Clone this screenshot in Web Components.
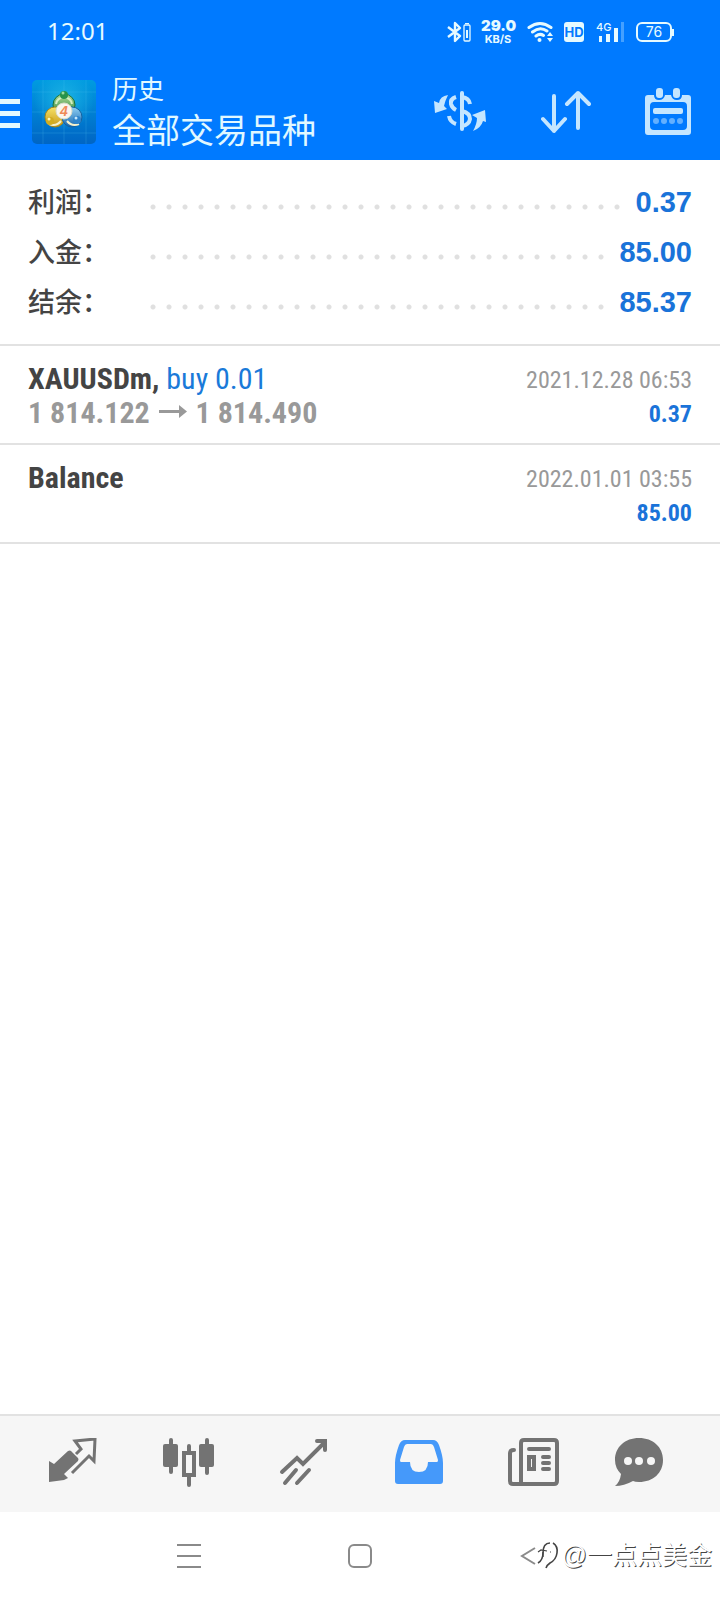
<!DOCTYPE html>
<html lang="zh-CN">
<head>
<meta charset="utf-8">
<meta name="viewport" content="width=device-width, initial-scale=1">
<title>历史</title>
<style>
    body {
        margin: 0;
        background: #fff;
        font-family: "Liberation Sans", "Noto Sans CJK SC", sans-serif;
    }
</style>
</head>
<body>
<history-app></history-app>

<script>
    class BaseElement extends HTMLElement {
        constructor() {
            super()
            this.attachShadow({ mode: "open" })
            this.shadowRoot.innerHTML = this.template()
        }
    }

    window.customElements.define('status-bar',
        class extends BaseElement {
            template() {
                return `
                <style>
                    :host{
                        display:flex;
                        align-items:center;
                        justify-content:space-between;
                        height:64px;
                        padding:0 46px 0 47px;
                        color:#e6faff;
                        font-family:Inter, "Noto Sans", sans-serif;
                    }
                    time{
                        font-family:"Noto Sans", sans-serif;
                        font-size:24px;
                        line-height:34px;
                        padding-bottom:2px;
                    }
                    .icons{
                        display:flex;
                        align-items:center;
                    }
                    .speed{
                        width:34px;
                        margin:0 12px 0 10px;
                        text-align:center;
                        font-size:11px;
                        line-height:12px;
                        font-weight:700;
                    }
                    .speed b{
                        display:block;
                        font-size:15px;
                        line-height:14px;
                    }
                    .hd{
                        width:20px;
                        margin:0 12px 0 10px;
                        border-radius:3px;
                        background:#e6faff;
                        color:#007aff;
                        text-align:center;
                        font-size:13px;
                        line-height:20px;
                        font-weight:700;
                    }
                    .cell{
                        display:grid;
                    }
                    .cell > *{
                        grid-area:1 / 1;
                    }
                    .cell span{
                        font-size:11px;
                        line-height:10px;
                        font-weight:500;
                    }
                    .battery{
                        display:flex;
                        align-items:center;
                        margin-left:12px;
                    }
                    .battery span{
                        box-sizing:border-box;
                        width:36px;
                        border:2px solid #e6faff;
                        border-radius:6px;
                        text-align:center;
                        font-size:14px;
                        line-height:16px;
                    }
                    .battery::after{
                        content:"";
                        width:2px;
                        height:7px;
                        background:#e6faff;
                    }
                    svg{
                        display:block;
                    }
                </style>
                <time>12:01</time>
                <div class="icons">
                    <svg width="24" height="22" viewBox="0 0 24 22" fill="none" stroke="currentColor">
                        <path d="M1 6l12 9-5 5V2l5 5-12 9" stroke-width="2.400" stroke-linejoin="round"/>
                        <rect x="17" y="4" width="6" height="16" rx="1" stroke-width="1.300"/>
                        <path d="M18 2.500h4"/>
                        <path d="M20 9v8" stroke-width="2"/>
                    </svg>
                    <div class="speed"><b>29.0</b>KB/S</div>
                    <svg width="27" height="22" viewBox="0 0 27 22" fill="none" stroke="currentColor" stroke-width="3" stroke-linecap="round">
                        <path d="M2 6.500Q13 -1.500 24 6.500M5.500 11Q13 5 20 10M9 15Q13 12 16.500 14.500"/>
                        <circle cx="12.500" cy="19" r="2" fill="currentColor" stroke="none"/>
                        <path d="M20 15l3-4 3 4zM20 17l3 4 3-4z" fill="currentColor" stroke="none"/>
                    </svg>
                    <div class="hd">HD</div>
                    <div class="cell">
                        <svg width="28" height="20" viewBox="0 0 28 20" fill="currentColor">
                            <rect x="3" y="14" width="3" height="6"/>
                            <rect x="10" y="12" width="4" height="8"/>
                            <rect x="18" y="6" width="4" height="14"/>
                            <rect x="25" width="3" height="20" opacity=".3"/>
                        </svg>
                        <span>4G</span>
                    </div>
                    <div class="battery"><span>76</span></div>
                </div>
                `
            }
        }
    )

    window.customElements.define('app-logo',
        class extends BaseElement {
            template() {
                return `
                <style>
                    :host{
                        display:block;
                        width:64px;
                        height:64px;
                    }
                </style>
                <svg width="64" height="64" viewBox="0 0 64 64" aria-hidden="true">
                    <defs>
                        <linearGradient id="bg" x2="0" y2="1"><stop stop-color="#009be0"/><stop offset="1" stop-color="#0065c4"/></linearGradient>
                        <radialGradient id="glow"><stop stop-color="#1cb4e4"/><stop offset="1" stop-color="#1cb4e4" stop-opacity="0"/></radialGradient>
                        <linearGradient id="green" x2="0" y2="1"><stop stop-color="#b5dc94"/><stop offset="1" stop-color="#1d7f3b"/></linearGradient>
                        <linearGradient id="gold" x2="0" y2="1"><stop stop-color="#f6e266"/><stop offset="1" stop-color="#c89818"/></linearGradient>
                        <linearGradient id="blue" x2="0" y2="1"><stop stop-color="#8fd0f5"/><stop offset="1" stop-color="#1766ae"/></linearGradient>
                    </defs>
                    <rect width="64" height="64" rx="5" fill="url(#bg)"/>
                    <circle cx="32" cy="20" r="30" fill="url(#glow)"/>
                    <path d="M11 0v64M32 0v64M54 0v64M0 12h64M0 32h64M0 53h64" stroke="#5fc8f5" stroke-opacity=".2"/>
                    <circle cx="32" cy="25" r="11" fill="url(#green)" stroke="#15703c"/>
                    <circle cx="23" cy="37" r="10" fill="url(#gold)" stroke="#a58720"/>
                    <circle cx="40" cy="37" r="10" fill="url(#blue)" stroke="#1761a0"/>
                    <path d="M24 24q1-6 8-7 7 1 8 7" fill="none" stroke="#d5efc2" stroke-width="2"/>
                    <path d="M17 44q7 3 12-3M35 41q5 6 12 3" fill="none" stroke="#f4f1cd" stroke-width="2"/>
                    <circle cx="32" cy="15" r="4" fill="#27934c"/>
                    <circle cx="18" cy="41" r="4" fill="#d2ad20"/>
                    <circle cx="45" cy="40" r="4" fill="#2c84cd"/>
                    <circle cx="31" cy="13" r="1.500" fill="#9bdc9f"/>
                    <circle cx="17" cy="39" r="1.500" fill="#fff6b8"/>
                    <circle cx="44" cy="38" r="1.500" fill="#c5e9ff"/>
                    <circle cx="32" cy="31" r="8" fill="#fbf6ee" stroke="#d9dcc8"/>
                    <text x="32" y="36" text-anchor="middle" font-family="Liberation Sans" font-size="14" font-style="italic" font-weight="700" fill="#f08a58">4</text>
                </svg>
                `
            }
        }
    )

    window.customElements.define('app-header',
        class extends BaseElement {
            template() {
                return `
                <style>
                    :host{
                        display:flex;
                        align-items:center;
                        height:96px;
                        color:#e1f8ff;
                    }
                    button{
                        padding:0;
                        border:0;
                        background:none;
                        color:inherit;
                    }
                    svg{
                        display:block;
                    }
                    .menu{
                        margin-right:12px;
                    }
                    .titles{
                        flex:1;
                        padding-left:16px;
                        font-family:"Noto Sans CJK SC", sans-serif;
                    }
                    h1, p{
                        margin:0;
                        font-weight:400;
                    }
                    p{
                        font-size:26px;
                        line-height:34px;
                    }
                    h1{
                        font-size:34px;
                        line-height:48px;
                    }
                    .actions{
                        display:flex;
                        gap:54px;
                        padding-right:29px;
                        color:#c5e6ff;
                    }
                </style>
                <button class="menu" aria-label="菜单">
                    <svg width="20" height="34" viewBox="0 0 20 34" fill="currentColor">
                        <path d="M0 4h20v5H0zM0 16h20v5H0zM0 28h20v5H0z"/>
                    </svg>
                </button>
                <app-logo></app-logo>
                <div class="titles">
                    <p><slot name="title"></slot></p>
                    <h1><slot name="subtitle"></slot></h1>
                </div>
                <div class="actions">
                    <button aria-label="货币">
                        <svg width="54" height="48" viewBox="0 0 54 48" fill="none" stroke="currentColor" stroke-width="4">
                            <path d="M29 5v36" stroke-linecap="round"/>
                            <path d="M23 9Q17 11 18 16q1 4 5 6M29 9q7 1 8 7M29 23q8 2 8 8-1 6-8 7M16 28q1 6 7 8"/>
                            <path d="M15 7Q7 8 6 15L1 13l1 12 12-4-3-3q1-5 4-11z" fill="currentColor" stroke="none"/>
                            <path d="M40 43q8-3 10-10l3 1-1-12-13 5 5 3q0 6-4 13z" fill="currentColor" stroke="none"/>
                        </svg>
                    </button>
                    <button aria-label="排序">
                        <svg width="50" height="48" viewBox="0 0 50 48" fill="none" stroke="currentColor" stroke-width="4" stroke-linecap="round" stroke-linejoin="round">
                            <path d="M13 8v35M2 31l11 12 11-12M37 40V5M26 16L37 5l11 11"/>
                        </svg>
                    </button>
                    <button aria-label="日期">
                        <svg width="46" height="48" viewBox="0 0 46 48">
                            <path fill="currentColor" fill-rule="evenodd" d="M3 7h6q0 5 5 5t6-5h6q1 5 6 5t5-5h6q3 0 3 3v34q0 3-3 3H3q-3 0-3-3V10q0-3 3-3zM9 14q-4 0-4 4v20q0 4 4 4h29q4 0 4-4V18q0-4-4-4z"/>
                            <rect x="11" width="7" height="10" rx="3" fill="currentColor"/>
                            <rect x="28" width="7" height="10" rx="3" fill="currentColor"/>
                            <rect x="8" y="20" width="30" height="6" rx="2" fill="currentColor"/>
                            <g fill="currentColor" opacity=".5">
                                <circle cx="11" cy="33" r="3"/><circle cx="19" cy="33" r="3"/><circle cx="27" cy="33" r="3"/><circle cx="35" cy="33" r="3"/>
                            </g>
                        </svg>
                    </button>
                </div>
                `
            }
        }
    )

    window.customElements.define('summary-row',
        class extends BaseElement {
            template() {
                return `
                <style>
                    :host{
                        display:flex;
                        align-items:baseline;
                        height:50px;
                        line-height:47px;
                    }
                    .label{
                        width:117px;
                        color:#444;
                        font-family:"Noto Sans CJK SC", sans-serif;
                        font-size:27px;
                        font-weight:500;
                    }
                    .dots{
                        flex:1;
                        align-self:center;
                        height:6px;
                        margin:10px 8px 0 0;
                        background:radial-gradient(circle at 8px 3px, #e0e0e0 2px, transparent 3px) 0 0 / 16px 6px repeat-x;
                    }
                    .value{
                        color:#1a73d9;
                        font-size:29px;
                        font-weight:700;
                    }
                </style>
                <span class="label"><slot name="label"></slot></span>
                <span class="dots"></span>
                <span class="value"><slot></slot></span>
                `
            }
        }
    )

    window.customElements.define('deal-item',
        class extends BaseElement {
            template() {
                return `
                <style>
                    :host{
                        display:flex;
                        justify-content:space-between;
                        padding:15px 28px 12px;
                        border-bottom:2px solid #e2e2e2;
                        font-family:"Roboto Condensed", Roboto, sans-serif;
                        font-size:30px;
                        line-height:35px;
                    }
                    .symbol{
                        color:#444;
                        font-weight:700;
                    }
                    .side{
                        color:#1a7ad9;
                    }
                    .price{
                        color:#999;
                        font-weight:700;
                        line-height:34px;
                    }
                    .right{
                        padding-top:2px;
                        text-align:right;
                        font-size:24px;
                        line-height:34px;
                    }
                    .time{
                        color:#999;
                    }
                    .profit{
                        color:#1a73d9;
                        font-weight:700;
                    }
                </style>
                <div>
                    <div><span class="symbol"><slot name="symbol"></slot></span> <span class="side"><slot name="side"></slot></span></div>
                    <div class="price"><slot name="price"></slot></div>
                </div>
                <div class="right">
                    <div class="time"><slot name="time"></slot></div>
                    <div class="profit"><slot name="profit"></slot></div>
                </div>
                `
            }
        }
    )

    window.customElements.define('price-arrow',
        class extends BaseElement {
            template() {
                return `
                <style>
                    :host{
                        display:inline-block;
                        margin:0 2px;
                    }
                    svg{
                        display:block;
                    }
                </style>
                <svg width="28" height="22" viewBox="0 0 28 22" role="img" aria-label="至">
                    <path d="M0 9h20V4l8 6.500-8 6.500v-5H0z" fill="currentColor"/>
                </svg>
                `
            }
        }
    )

    window.customElements.define('tab-bar',
        class extends BaseElement {
            template() {
                return `
                <style>
                    nav{
                        display:grid;
                        grid-template-columns:repeat(4, 1fr) 106px 106px;
                        justify-items:start;
                        box-sizing:border-box;
                        height:98px;
                        padding:22px 0 0 48px;
                        border-top:2px solid #e2e2e2;
                        background:#f6f6f6;
                    }
                    a{
                        color:#737373;
                    }
                    .active{
                        color:#4599fa;
                    }
                    svg{
                        display:block;
                    }
                </style>
                <nav>
                    <a href="#quotes" aria-label="行情">
                        <svg width="52" height="50" viewBox="0 0 52 50">
                            <path fill="currentColor" d="M1 23l5 3 14-13q2-1 3 0l7 7q1 1 0 3L16 36l4 4-4 2-15 2z"/>
                            <path fill="none" stroke="currentColor" stroke-width="3" d="M28 16l5-5-6-8 20-2-1 22-5-5-17 17"/>
                        </svg>
                    </a>
                    <a href="#chart" aria-label="图表">
                        <svg width="52" height="50" viewBox="0 0 52 50" fill="currentColor">
                            <rect y="6" width="15" height="23" rx="2"/><rect x="36" y="6" width="15" height="23" rx="2"/>
                            <path stroke="currentColor" stroke-width="4" stroke-linecap="round" d="M8 2v32M44 2v33M26 8v6M26 38v9"/>
                            <rect x="21" y="15" width="10" height="22" fill="none" stroke="currentColor" stroke-width="4"/>
                        </svg>
                    </a>
                    <a href="#trade" aria-label="交易">
                        <svg width="52" height="50" viewBox="0 0 52 50" fill="none" stroke="currentColor" stroke-width="4" stroke-linecap="round">
                            <path d="M4 34l15-14 6 6L47 4M39 3h8v9M7 45l11-13M19 45l12-13"/>
                        </svg>
                    </a>
                    <a class="active" href="#history" aria-label="历史">
                        <svg width="52" height="50" viewBox="0 0 52 50" fill="currentColor">
                            <path fill-rule="evenodd" d="M12 2h28q4 0 6 5 4 11 4 18v18q0 3-3 3H5q-3 0-3-3V25Q2 18 6 7q2-5 6-5zM14 6q-2 0-3 3L7 22q0 2 1 2h9q0 10 9 10t9-10h9q1 0 1-2L41 9q-1-3-3-3z"/>
                        </svg>
                    </a>
                    <a href="#news" aria-label="新闻">
                        <svg width="52" height="50" viewBox="0 0 52 50" fill="none" stroke="currentColor" stroke-width="4" stroke-linecap="round">
                            <path d="M13 46V5q0-3 3-3h30q3 0 3 3v38q0 3-3 3H5q-3 0-3-3V15q0-3 4-3"/>
                            <path d="M21 11h20M35 19h6M35 25h6M35 31h6"/>
                            <rect x="21" y="19" width="5" height="12"/>
                        </svg>
                    </a>
                    <a href="#messages" aria-label="消息">
                        <svg width="52" height="50" viewBox="0 0 52 50">
                            <path fill="currentColor" d="M25 0C39 0 49 9 49 22S39 44 25 44q-4 0-6-1-9 5-18 5 5-4 6-12-6-6-6-14C1 9 11 0 25 0z"/>
                            <g fill="#f6f6f6"><circle cx="14" cy="23" r="4"/><circle cx="25" cy="23" r="4"/><circle cx="37" cy="23" r="4"/></g>
                        </svg>
                    </a>
                </nav>
                `
            }
        }
    )

    window.customElements.define('system-nav',
        class extends BaseElement {
            template() {
                return `
                <style>
                    :host{
                        display:grid;
                        grid-template-columns:repeat(3, 1fr);
                        align-items:center;
                        justify-items:center;
                        position:relative;
                        height:88px;
                        padding:0 104px;
                    }
                    button{
                        padding:0;
                        border:0;
                        background:none;
                        color:#8a8a8a;
                    }
                    svg{
                        display:block;
                    }
                    .mark{
                        position:absolute;
                        right:8px;
                        top:26px;
                        display:flex;
                        align-items:center;
                        color:#fff;
                        font-family:"Liberation Sans", "Noto Sans CJK SC", sans-serif;
                        font-size:25px;
                        line-height:34px;
                        text-shadow:1px 1px 0 #444;
                    }
                </style>
                <button aria-label="最近任务">
                    <svg width="24" height="26" viewBox="0 0 24 26" fill="none" stroke="currentColor" stroke-width="2"><path d="M0 2h24M0 13h24M0 24h24"/></svg>
                </button>
                <button aria-label="主屏幕">
                    <svg width="24" height="24" viewBox="0 0 24 24" fill="none" stroke="currentColor" stroke-width="2"><rect x="1" y="1" width="22" height="22" rx="5"/></svg>
                </button>
                <button aria-label="返回">
                    <svg width="24" height="20" viewBox="0 0 24 20" fill="none" stroke="currentColor" stroke-width="2"><path d="M16 2L3 10l13 8"/></svg>
                </button>
                <div class="mark">
                    <svg width="25" height="30" viewBox="0 0 25 30" fill="none" stroke="#444">
                        <path d="M13 3Q6 3 6 13q0 7-5 10" stroke-width="1.600"/>
                        <path d="M1 12l3-2 6 1M6 12v5M13 12h1" stroke-width="1.200"/>
                        <path d="M16 3q5 3 4 10-1 7-7 10-3 2-4 5" stroke-width="1.600"/>
                    </svg>
                    <span>@一点点美金</span>
                </div>
                `
            }
        }
    )

    window.customElements.define('history-app',
        class extends BaseElement {
            template() {
                return `
                <style>
                    :host{
                        display:flex;
                        flex-direction:column;
                        min-height:100vh;
                    }
                    header{
                        background:#007aff;
                    }
                    main{
                        flex:1;
                    }
                    .summary{
                        padding:17px 28px;
                        border-bottom:2px solid #e2e2e2;
                    }
                </style>
                <header>
                    <status-bar></status-bar>
                    <app-header>
                        <span slot="title">历史</span>
                        <span slot="subtitle">全部交易品种</span>
                    </app-header>
                </header>
                <main>
                    <section class="summary">
                        <summary-row><span slot="label">利润：</span>0.37</summary-row>
                        <summary-row><span slot="label">入金：</span>85.00</summary-row>
                        <summary-row><span slot="label">结余：</span>85.37</summary-row>
                    </section>
                    <deal-item>
                        <span slot="symbol">XAUUSDm,</span>
                        <span slot="side">buy 0.01</span>
                        <span slot="price">1 814.122 <price-arrow></price-arrow> 1 814.490</span>
                        <span slot="time">2021.12.28 06:53</span>
                        <span slot="profit">0.37</span>
                    </deal-item>
                    <deal-item>
                        <span slot="symbol">Balance</span>
                        <span slot="time">2022.01.01 03:55</span>
                        <span slot="profit">85.00</span>
                    </deal-item>
                </main>
                <tab-bar></tab-bar>
                <system-nav></system-nav>
                `
            }
        }
    )
</script>
</body>
</html>
